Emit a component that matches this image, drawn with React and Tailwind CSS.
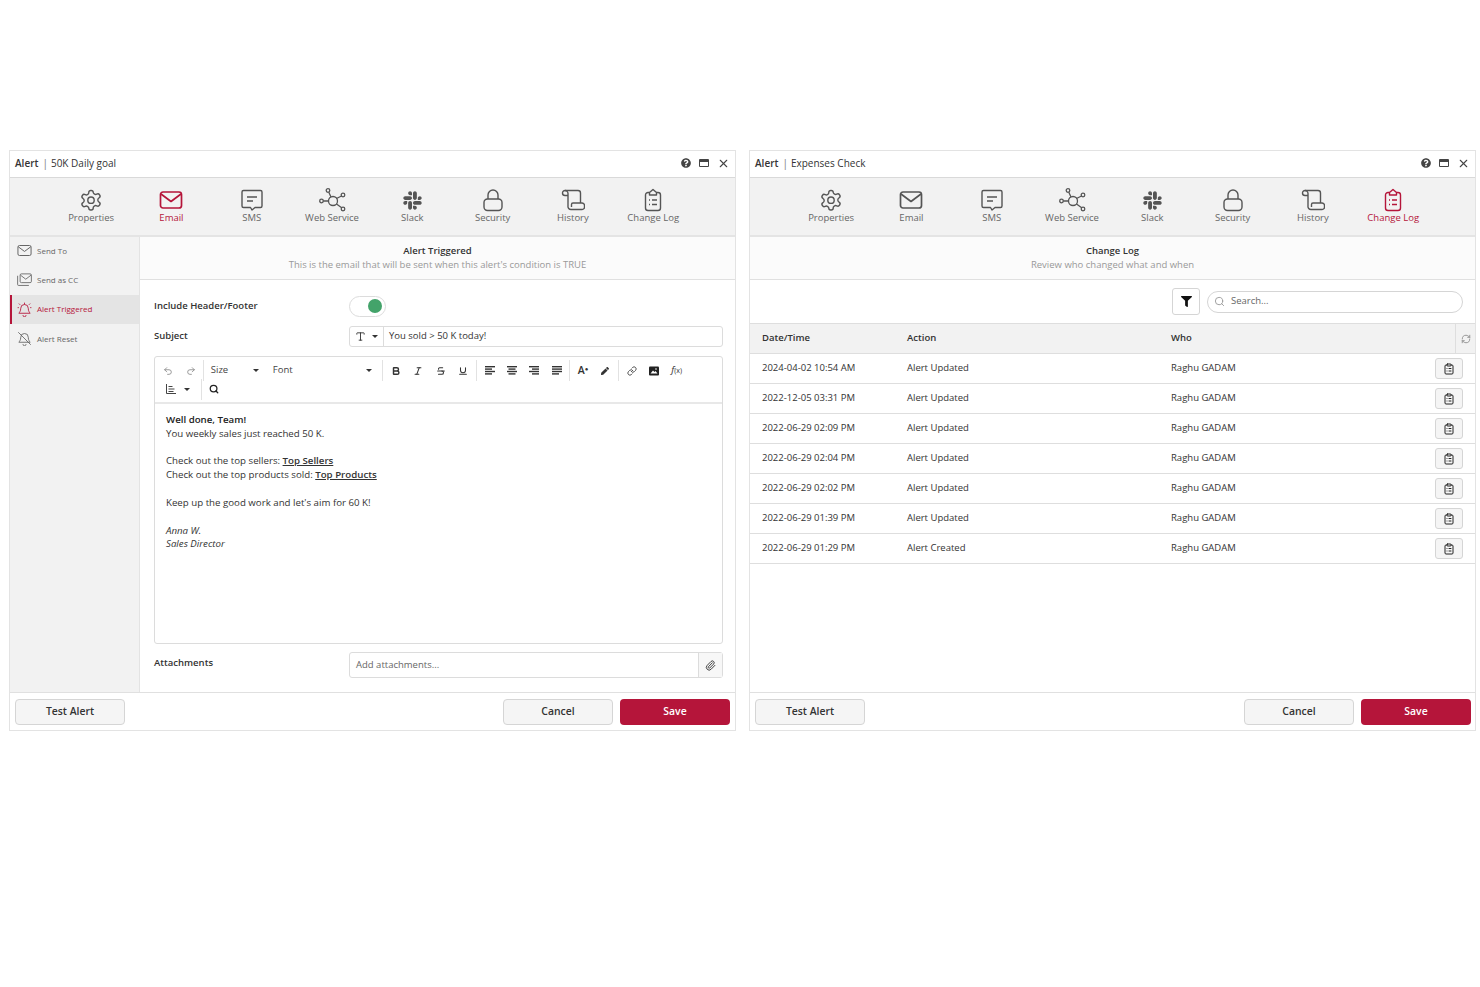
import React from 'react';
import { FaSlack, FaFilter, FaQuestionCircle, FaPen } from 'react-icons/fa';
import { Undo2, Redo2, Bold, Italic, Strikethrough, Underline, Link, Search, Paperclip, RefreshCw, X, Type, ClipboardList } from 'lucide-react';

const Gear = ({ c }) => (
  <svg width="24" height="24" viewBox="0 0 24 24" fill="none" stroke={c} strokeWidth="1.4" strokeLinejoin="round">
    <path d="M12.22 2.5h-.44a2 2 0 0 0-2 2v.18a2 2 0 0 1-1 1.73l-.43.25a2 2 0 0 1-2 0l-.15-.08a2 2 0 0 0-2.73.73l-.22.38a2 2 0 0 0 .73 2.73l.15.1a2 2 0 0 1 1 1.72v.51a2 2 0 0 1-1 1.74l-.15.09a2 2 0 0 0-.73 2.73l.22.38a2 2 0 0 0 2.73.73l.15-.08a2 2 0 0 1 2 0l.43.25a2 2 0 0 1 1 1.73V20a2 2 0 0 0 2 2h.44a2 2 0 0 0 2-2v-.18a2 2 0 0 1 1-1.73l.43-.25a2 2 0 0 1 2 0l.15.08a2 2 0 0 0 2.73-.73l.22-.39a2 2 0 0 0-.73-2.73l-.15-.08a2 2 0 0 1-1-1.74v-.5a2 2 0 0 1 1-1.74l.15-.09a2 2 0 0 0 .73-2.73l-.22-.38a2 2 0 0 0-2.73-.73l-.15.08a2 2 0 0 1-2 0l-.43-.25a2 2 0 0 1-1-1.73V4.5a2 2 0 0 0-2-2z" />
    <circle cx="12" cy="12.2" r="3.2" />
  </svg>
);

const MailIcon = ({ c, w = 1.7 }) => (
  <svg width="24" height="24" viewBox="0 0 24 24" fill="none" stroke={c} strokeWidth={w} strokeLinejoin="round">
    <rect x="1.5" y="4" width="21" height="16" rx="2.5" />
    <path d="M2 6l10 7.5L22 6" />
  </svg>
);

const SmsIcon = ({ c }) => (
  <svg width="24" height="24" viewBox="0 0 24 24" fill="none" stroke={c} strokeWidth="1.4" strokeLinejoin="round">
    <path d="M3.5 2.5h17a1.5 1.5 0 0 1 1.5 1.5v14a1.5 1.5 0 0 1-1.5 1.5H15l-3 2.5-1.5-2.5h-7A1.5 1.5 0 0 1 2 18V4a1.5 1.5 0 0 1 1.5-1.5z" />
    <path d="M7 9h10M7 13h6" />
  </svg>
);

const NetIcon = ({ c }) => (
  <svg width="28" height="24" viewBox="0 0 28 24" fill="none" stroke={c} strokeWidth="1.3">
    <circle cx="15" cy="13" r="4.5" />
    <circle cx="10" cy="2.5" r="1.8" />
    <circle cx="25" cy="7" r="1.8" />
    <circle cx="3.5" cy="13" r="1.8" />
    <circle cx="25" cy="21" r="1.8" />
    <path d="M10.8 4.2l2.2 4.800M23.5 8l-5 2.5M5.300 13h5.200M23.700 19.700l-5.200-3.700" />
  </svg>
);

const LockIcon = ({ c }) => (
  <svg width="24" height="24" viewBox="0 0 24 24" fill="none" stroke={c} strokeWidth="1.4">
    <rect x="3" y="11" width="18" height="11.5" rx="3.5" />
    <path d="M7 11V7a5 5 0 0 1 10 0v4" />
  </svg>
);

const ScrollIcon = ({ c }) => (
  <svg width="24" height="24" viewBox="0 0 24 24" fill="none" stroke={c} strokeWidth="1.4" strokeLinejoin="round">
    <path d="M4 2.5h13a2.5 2.5 0 0 1 2.5 2.5v10" />
    <path d="M4 2.5a2.5 2.5 0 0 0-2.500 2.500c0 1.500 1 2.500 2.500 2.500h3" />
    <path d="M4 2.5a3 3 0 0 1 3 3V18a3 3 0 0 0 3 3.500h11a2.500 2.500 0 0 0 2.500-3v-1a2.500 2.500 0 0 0-2.500-2.500H12a1.500 1.500 0 0 0-1.500 1.500v2.500" />
  </svg>
);

const ClipIcon = ({ c, size = 24 }) => (
  <svg width={size} height={size} viewBox="0 0 24 24" fill="none" stroke={c} strokeWidth="1.4" strokeLinejoin="round">
    <path d="M8.5 4.5H7A2.5 2.5 0 0 0 4.500 7v13A2.500 2.500 0 0 0 7 22.500h10a2.500 2.500 0 0 0 2.500-2.500V7A2.500 2.500 0 0 0 17 4.500h-1.500" />
    <path d="M8.5 7V4.5L12 1.500l3.500 3V7z" />
    <path d="M8 12h1M8 16.500h1M11 12h5M11 16.500h5" />
  </svg>
);

const BellAlert = ({ c }) => (
  <svg width="17" height="17" viewBox="0 0 24 24" fill="none" stroke={c} strokeWidth="1.4" strokeLinejoin="round">
    <path d="M12 4a6 6 0 0 0-6 6c0 5-2.500 7-3 8h18c-.5-1-3-3-3-8a6 6 0 0 0-6-6z" />
    <path d="M9.5 21a2.500 2.500 0 0 0 5 0M12 1v3M3 2.500l2 2M21 2.500l-2 2M1 9h2M21 9h2" />
  </svg>
);

const BellOff = ({ c }) => (
  <svg width="17" height="17" viewBox="0 0 24 24" fill="none" stroke={c} strokeWidth="1.4" strokeLinejoin="round">
    <path d="M12 4a6 6 0 0 0-6 6c0 5-2.500 7-3 8h18c-.5-1-3-3-3-8a6 6 0 0 0-6-6z" />
    <path d="M9.5 21a2.500 2.500 0 0 0 5 0M2 2l20 20" />
  </svg>
);

const CcIcon = ({ c }) => (
  <svg width="17" height="17" viewBox="0 0 24 24" fill="none" stroke={c} strokeWidth="1.4" strokeLinejoin="round">
    <rect x="5" y="3" width="18" height="14" rx="2" />
    <path d="M5.5 5l8.500 6.500L22.500 5" />
    <path d="M1 6v14a1.500 1.500 0 0 0 1.500 1.500H19" />
  </svg>
);

// editor alignment glyph: four bars, each [x, width]
const Bars = ({ rows }) => (
  <svg width="10" height="9" viewBox="0 0 10 9" fill="#333">
    {rows.map(([x, w], i) => (
      <rect key={i} x={x} y={i * 2.4} width={w} height="1.4" />
    ))}
  </svg>
);

const LineHeightIcon = () => (
  <svg width="10" height="10" viewBox="0 0 10 10" fill="none" stroke="#444" strokeWidth="1">
    <path d="M.5 0v9.5H10M2.5 2.5h4M2.5 5h6M2.5 7.5h5" />
  </svg>
);

const PictureIcon = () => (
  <svg width="10" height="10" viewBox="0 0 10 10">
    <rect width="10" height="9" y=".5" rx="1" fill="#222" />
    <path d="M1.500 7.500l2.500-3 1.500 1.500 1-1 2 2.500z" fill="#fff" />
    <circle cx="7" cy="3" r=".8" fill="#fff" />
  </svg>
);

const tabs = [
  ['Properties', Gear],
  ['Email', MailIcon],
  ['SMS', SmsIcon],
  ['Web Service', NetIcon],
  ['Slack', ({ c }) => <FaSlack size={21} color={c} />],
  ['Security', LockIcon],
  ['History', ScrollIcon],
  ['Change Log', ClipIcon],
];

const Window = ({ name, active, children, actionsClass }) => (
  <div className="flex h-[581px] w-[727px] flex-col border border-[#e3e3e3] bg-white">
    <div className="flex h-[27px] shrink-0 items-center justify-between border-b border-[#d9d9d9] pb-[2px] pl-[5px] pr-[5px] text-[10px] text-[#333]">
      <div>
        <span className="font-semibold">Alert</span>
        <span className="ml-[4px] mr-[3px] text-[#777]">|</span>
        {name}
      </div>
      <div className="flex items-center gap-[8px] text-[#444]">
        <FaQuestionCircle size={10} />
        <div className="h-[8px] w-[10px] rounded-[1px] border border-[#444] border-t-[3px]" />
        <X size={13} strokeWidth={2} />
      </div>
    </div>
    <div className="flex h-[59px] shrink-0 border-b-2 border-[#e4e4e4] bg-[#f2f2f2] pl-[41px]">
      {tabs.map(([label, Icon]) => {
        const on = label === active;
        return (
          <div key={label} className={`flex w-[80.3px] flex-col items-center pt-[10px] text-[9.5px] leading-[14px] ${on ? 'text-[#b5153a]' : 'text-[#666]'}`}>
            <div className="flex h-[24px] items-center">
              <Icon c={on ? '#b5153a' : '#555'} />
            </div>
            <div className="-mt-[1px]">{label}</div>
          </div>
        );
      })}
    </div>
    {children}
    <div className="flex h-[38px] shrink-0 items-center justify-between border-t border-[#e0e0e0] px-[5px] pt-[1px] text-[10.4px] font-semibold">
      <button className="h-[26px] w-[110px] rounded-[4px] border border-[#d5d5d5] bg-[#f5f5f5] text-[#333]">Test Alert</button>
      <div className={`flex gap-[7px] ${actionsClass}`}>
        <button className="h-[26px] w-[110px] rounded-[4px] border border-[#d5d5d5] bg-[#f5f5f5] text-[#333]">Cancel</button>
        <button className="h-[26px] w-[110px] rounded-[4px] bg-[#b5153a] text-white">Save</button>
      </div>
    </div>
  </div>
);

const SectionHead = ({ title, sub }) => (
  <div className="flex h-[43px] shrink-0 flex-col items-center justify-center border-b border-[#e0e0e0] bg-[#fbfbfb] pb-[1px] text-[9.5px] leading-[14px]">
    <div className="font-semibold text-[#333]">{title}</div>
    <div className="text-[#999]">{sub}</div>
  </div>
);

const side = [
  ['Send To', ({ c }) => <MailIcon c={c} w={1.6} />],
  ['Send as CC', CcIcon],
  ['Alert Triggered', BellAlert],
  ['Alert Reset', BellOff],
];

const Sidebar = () => (
  <div className="w-[130px] shrink-0 border-r border-[#e3e3e3] bg-[#f2f2f2]">
    <div className="-mt-px">
      {side.map(([label, Icon]) => {
        const on = label === 'Alert Triggered';
        return (
          <div key={label} className={`flex h-[29.3px] items-center gap-[4px] text-[8px] ${on ? 'border-l-2 border-[#b5153a] bg-[#e4e4e4] pl-[4px] text-[#b5153a]' : 'pl-[6px] text-[#666]'}`}>
            <div className="flex h-[17px] w-[17px] items-center justify-center [&>svg]:h-[15px] [&>svg]:w-[15px]">
              <Icon c={on ? '#b5153a' : '#666'} />
            </div>
            <span>{label}</span>
          </div>
        );
      })}
    </div>
  </div>
);

const Caret = () => <span className="h-0 w-0 border-x-[3px] border-t-[3.5px] border-x-transparent border-t-[#333]" />;
const Divider = () => <div className="mx-[1.5px] h-[21px] w-px bg-[#e2e2e2]" />;
const Tool = ({ children }) => <div className="flex h-[21px] w-[22.4px] items-center justify-center text-[#333]">{children}</div>;

const Editor = () => (
  <div className="flex h-[288px] flex-col rounded-[3px] border border-[#dcdcdc]">
    <div className="h-[47px] shrink-0 border-b-2 border-[#e8e8e8] pl-[2px] pt-[3px]">
      <div className="flex h-[21px] items-center">
        <Tool><Undo2 size={10} color="#888" /></Tool>
        <Tool><Redo2 size={10} color="#888" /></Tool>
        <Divider />
        <div className="flex w-[56px] items-center justify-between pl-[5px] pr-[3px] text-[9.5px] text-[#444]">Size<Caret /></div>
        <div className="ml-[5px] flex w-[114px] items-center justify-between pl-[6px] pr-[9px] text-[9.5px] text-[#444]">Font<Caret /></div>
        <Divider />
        <Tool><Bold size={10} strokeWidth={3.5} /></Tool>
        <Tool><Italic size={10} strokeWidth={2.5} /></Tool>
        <Tool><Strikethrough size={10} strokeWidth={2.5} /></Tool>
        <Tool><Underline size={10} strokeWidth={2.5} /></Tool>
        <Divider />
        <Tool><Bars rows={[[0, 10], [0, 7], [0, 10], [0, 7]]} /></Tool>
        <Tool><Bars rows={[[0, 10], [1.5, 7], [0, 10], [1.5, 7]]} /></Tool>
        <Tool><Bars rows={[[0, 10], [3, 7], [0, 10], [3, 7]]} /></Tool>
        <Tool><Bars rows={[[0, 10], [0, 10], [0, 10], [0, 7]]} /></Tool>
        <Divider />
        <Tool><span className="text-[10.5px] font-semibold">A<sup className="text-[6px]">●</sup></span></Tool>
        <Tool><FaPen size={8} /></Tool>
        <Divider />
        <Tool><Link size={10} strokeWidth={2} /></Tool>
        <Tool><PictureIcon /></Tool>
        <Tool><span className="text-[9.5px]"><span className="italic">f</span><span className="text-[7px]">(x)</span></span></Tool>
      </div>
      <div className="flex h-[16px] items-center">
        <div className="flex w-[42px] items-center gap-[8px] pl-[9px]">
          <LineHeightIcon />
          <Caret />
        </div>
        <Divider />
        <Search size={10} strokeWidth={3} color="#222" className="ml-[6px]" />
      </div>
    </div>
    <div className="px-[11px] pt-[9px] text-[9.7px] leading-[13.8px] text-[#333]">
      <div className="font-semibold text-[#222]">Well done, Team!</div>
      <div>You weekly sales just reached 50 K.</div>
      <div className="mt-[13.8px]">Check out the top sellers: <span className="font-semibold underline">Top Sellers</span></div>
      <div>Check out the top products sold: <span className="font-semibold underline">Top Products</span></div>
      <div className="mt-[13.8px]">Keep up the good work and let's aim for 60 K!</div>
      <div className="mt-[14px] italic">Anna W.</div>
      <div className="italic">Sales Director</div>
    </div>
  </div>
);

const EmailPanel = () => (
  <div className="flex min-h-0 flex-1">
    <Sidebar />
    <div className="flex min-w-0 flex-1 flex-col">
      <SectionHead title="Alert Triggered" sub="This is the email that will be sent when this alert's condition is TRUE" />
      <div className="flex flex-1 flex-col pl-[14px] pr-[12px] text-[9.5px] text-[#333]">
        <div className="mt-[15px] flex h-[22px] items-center">
          <div className="w-[195px] font-semibold">Include Header/Footer</div>
          <div className="flex h-[21px] w-[37px] items-center justify-end rounded-full border border-[#dcdcdc] pr-[3px]">
            <div className="h-[14px] w-[14px] rounded-full bg-[#43a36a]" />
          </div>
        </div>
        <div className="mt-[9px] flex h-[21px] items-center">
          <div className="w-[195px] font-semibold">Subject</div>
          <div className="flex h-[21px] flex-1 items-center rounded-[3px] border border-[#dcdcdc]">
            <div className="flex h-full w-[34px] items-center gap-[6px] border-r border-[#dcdcdc] pl-[5px]">
              <Type size={11} color="#333" />
              <Caret />
            </div>
            <div className="pl-[5px]">You sold &gt; 50 K today!</div>
          </div>
        </div>
        <div className="mt-[9px]">
          <Editor />
        </div>
        <div className="mt-[8px] flex items-center">
          <div className="w-[195px] -translate-y-[2px] font-semibold">Attachments</div>
          <div className="flex h-[26px] flex-1 items-center rounded-[3px] border border-[#dcdcdc]">
            <div className="flex-1 pl-[6px] text-[#666]">Add attachments...</div>
            <div className="flex h-full w-[24px] items-center justify-center border-l border-[#dcdcdc] bg-[#f7f7f7]">
              <Paperclip size={11} color="#333" strokeWidth={2} />
            </div>
          </div>
        </div>
      </div>
    </div>
  </div>
);

const logs = [
  ['2024-04-02 10:54 AM', 'Alert Updated'],
  ['2022-12-05 03:31 PM', 'Alert Updated'],
  ['2022-06-29 02:09 PM', 'Alert Updated'],
  ['2022-06-29 02:04 PM', 'Alert Updated'],
  ['2022-06-29 02:02 PM', 'Alert Updated'],
  ['2022-06-29 01:39 PM', 'Alert Updated'],
  ['2022-06-29 01:29 PM', 'Alert Created'],
];

const LogPanel = () => (
  <div className="flex min-h-0 flex-1 flex-col">
    <SectionHead title="Change Log" sub="Review who changed what and when" />
    <div className="flex h-[43px] shrink-0 items-center justify-end gap-[7px] pr-[12px]">
      <div className="flex h-[27px] w-[28px] items-center justify-center rounded-[3px] border border-[#d5d5d5]">
        <FaFilter size={11} color="#111" />
      </div>
      <div className="flex h-[22px] w-[256px] items-center gap-[6px] rounded-full border border-[#d5d5d5] pl-[6px] text-[9.5px] text-[#666]">
        <Search size={11} color="#999" />
        Search...
      </div>
    </div>
    <div className="flex h-[31px] shrink-0 items-center border-y border-[#dedede] bg-[#f2f2f2] pl-[12px] text-[9.5px] font-semibold text-[#333]">
      <div className="w-[145px]">Date/Time</div>
      <div className="w-[264px]">Action</div>
      <div className="flex-1">Who</div>
      <div className="flex h-full w-[20px] items-center justify-center border-l border-[#dedede] pl-[1px]">
        <RefreshCw size={10} color="#888" />
      </div>
    </div>
    {logs.map(([date, action]) => (
      <div key={date} className="flex h-[30px] shrink-0 items-center border-b border-[#dedede] pl-[12px] pr-[12px] text-[9.5px] text-[#333]">
        <div className="w-[145px]">{date}</div>
        <div className="w-[264px]">{action}</div>
        <div className="flex-1">Raghu GADAM</div>
        <div className="flex h-[21px] w-[28px] items-center justify-center rounded-[3px] border border-[#d5d5d5] bg-[#f5f5f5]">
          <ClipboardList size={12} color="#222" strokeWidth={2} />
        </div>
      </div>
    ))}
    <div className="flex-1" />
  </div>
);

export default function App() {
  return (
    <div className="min-h-[987px] bg-white pl-[9px] pt-[150px]" style={{ fontFamily: '"Open Sans", sans-serif' }}>
      <div className="flex gap-[13px]">
        <Window name="50K Daily goal" active="Email">
          <EmailPanel />
        </Window>
        <Window name="Expenses Check" active="Change Log" actionsClass="-mr-px">
          <LogPanel />
        </Window>
      </div>
    </div>
  );
}
